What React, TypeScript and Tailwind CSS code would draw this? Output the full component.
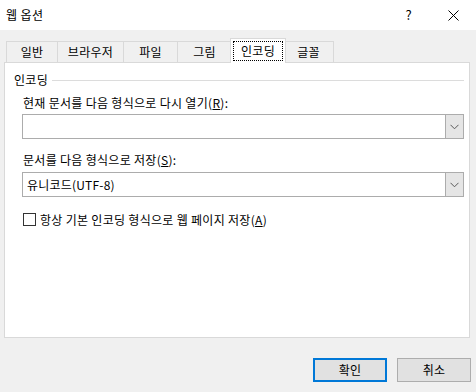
const font = { fontFamily: '"Noto Sans CJK KR", "Noto Sans", sans-serif' };

function Chevron() {
  return (
    <svg width="9" height="6" viewBox="0 0 9 6" className="block">
      <path d="M0.5 0.8 L4.5 4.8 L8.5 0.8" fill="none" stroke="#5a5a5a" strokeWidth="1" />
    </svg>
  );
}

function Combo({ value }: { value?: string }) {
  return (
    <div className="flex h-[25px] border border-[#acacac] bg-white">
      <div className="flex flex-1 items-center pl-[4px] text-[12px] tracking-[0.2px] text-black">{value}</div>
      <div className="flex w-[18px] items-center justify-center border-l border-[#acacac] bg-[#e5e5e5]">
        <Chevron />
      </div>
    </div>
  );
}

function Tab({ label, w, active }: { label: string; w: string; active?: boolean }) {
  if (active) {
    return (
      <div className={`${w} relative z-10 -mb-px -mx-[2px] flex h-[25px] items-stretch border border-b-0 border-[#d9d9d9] bg-white p-[2px]`}>
        <div className="flex flex-1 items-center justify-center border border-dotted border-black text-[12px] tracking-[0.3px]">
          {label}
        </div>
      </div>
    );
  }
  return (
    <div className={`${w} -ml-px flex h-[21px] items-center justify-center border border-b-0 border-[#d9d9d9] bg-[#f0f0f0] text-[12px] tracking-[0.3px]`}>
      {label}
    </div>
  );
}

export default function App() {
  return (
    <div className="flex h-[392px] w-[476px] flex-col bg-[#f0f0f0] text-black" style={font}>
      <div className="flex h-[30px] items-center bg-white">
        <div className="pl-[6px] text-[12px] tracking-[0.4px]">웹 옵션</div>
        <div className="ml-auto flex h-full items-center">
          <div className="flex w-[46px] items-center justify-center pl-[3px] text-[13px]">?</div>
          <div className="flex w-[46px] items-center justify-center">
            <svg width="11" height="11" viewBox="0 0 11 11">
              <path d="M0.5 0.5 L10.5 10.5 M10.5 0.5 L0.5 10.5" stroke="#000" strokeWidth="1" />
            </svg>
          </div>
        </div>
      </div>

      <div className="pl-[4px] pt-[8px]">
        <div className="flex items-end pl-[3px]">
          <Tab label="일반" w="w-[52px]" />
          <Tab label="브라우저" w="w-[67px]" />
          <Tab label="파일" w="w-[55px]" />
          <Tab label="그림" w="w-[55px]" />
          <Tab label="인코딩" w="w-[56px]" active />
          <Tab label="글꼴" w="w-[51px]" />
        </div>

        <div className="h-[276px] w-[466px] border border-[#d9d9d9] bg-white pl-[9px] pr-[5px]">
          <div className="mt-[8px] flex h-[18px] items-center text-[12px] tracking-[0.3px]">
            <span>인코딩</span>
            <div className="ml-[4px] h-px flex-1 bg-[#dcdcdc]" />
          </div>

          <div className="pl-[8px]">
            <div className="mt-[6px] flex h-[16px] items-center pl-[1px] text-[12px] tracking-[0.3px]">
              현재 문서를 다음 형식으로 다시 열기(<span className="underline">R</span>):
            </div>
            <div className="mt-[3px]">
              <Combo />
            </div>

            <div className="mt-[13px] flex h-[16px] items-center pl-[1px] text-[12px] tracking-[0.3px]">
              문서를 다음 형식으로 저장(<span className="underline">S</span>):
            </div>
            <div className="mt-[4px]">
              <Combo value="유니코드(UTF-8)" />
            </div>

            <div className="mt-[16px] flex h-[13px] items-center pl-[1px] text-[12px] tracking-[0.3px]">
              <div className="h-[13px] w-[13px] border border-[#333333] bg-white" />
              <span className="ml-[4px]">
                항상 기본 인코딩 형식으로 웹 페이지 저장(<span className="underline">A</span>)
              </span>
            </div>
          </div>
        </div>
      </div>

      <div className="mt-[20px] flex justify-end gap-[10px] pr-[5px]">
        <button className="flex h-[24px] w-[74px] items-center justify-center border-2 border-[#0078d7] bg-[#e1e1e1] text-[12px] tracking-[0.3px]">
          확인
        </button>
        <button className="flex h-[24px] w-[74px] items-center justify-center border border-[#adadad] bg-[#e1e1e1] text-[12px] tracking-[0.3px]">
          취소
        </button>
      </div>
    </div>
  );
}
